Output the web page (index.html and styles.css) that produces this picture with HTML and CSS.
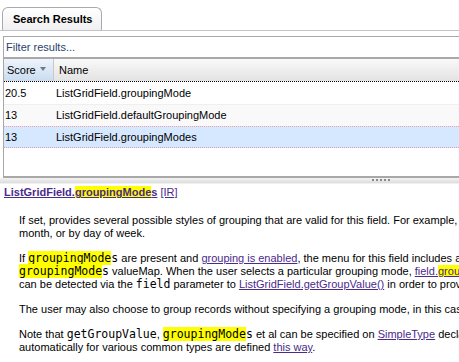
FILE: index.html
```html
<!DOCTYPE html>
<html>
<head>
<meta charset="utf-8">
<link rel="stylesheet" href="styles.css">
</head>
<body>
<div class="tabbar">
  <div class="tab">Search Results</div>
</div>
<div class="grid">
  <div class="filter">Filter results...</div>
  <div class="header">
    <div class="hcell score">Score<span class="sort"></span></div>
    <div class="hcell name">Name</div>
  </div>
  <div class="rows">
    <div class="row"><div class="c1">20.5</div><div class="c2">ListGridField.groupingMode</div></div>
    <div class="row alt"><div class="c1">13</div><div class="c2">ListGridField.defaultGroupingMode</div></div>
    <div class="row sel"><div class="c1">13</div><div class="c2">ListGridField.groupingModes</div></div>
  </div>
</div>
<div class="splitter"><span class="grip"></span></div>
<div class="detail">
  <div class="title"><a class="tlink">ListGridField.<span class="hl">groupingMode</span>s</a> <a class="ir">[IR]</a></div>
  <div class="body">
    <p>If set, provides several possible styles of grouping that are valid for this field. For example, a date field might be grouped by week, by<br>month, or by day of week.</p>
    <p>If <code><span class="hl">groupingMode</span>s</code> are present and <a>grouping is enabled</a>, the menu for this field includes a submenu of grouping modes generated from the<br><code><span class="hl">groupingMode</span>s</code> valueMap. When the user selects a particular grouping mode, <a>field.<span class="hl">groupingMode</span></a> is set to the user's chosen mode. This choice<br>can be detected via the <code>field</code> parameter to <a>ListGridField.getGroupValue()</a> in order to provide different modes of grouping.</p>
    <p>The user may also choose to group records without specifying a grouping mode, in this case, the default grouping mode is used.</p>
    <p>Note that <code>getGroupValue</code>, <code><span class="hl">groupingMode</span>s</code> et al can be specified on <a>SimpleType</a> declarations, and the grouping modes for dates are built in<br>automatically for various common types are defined <a>this way</a>.</p>
  </div>
</div>
</body>
</html>
```
FILE: styles.css
```css
html, body {
  margin: 0;
  padding: 0;
  background: #fff;
}
body {
  width: 459px;
  height: 362px;
  overflow: hidden;
  font-family: Arial, "Liberation Sans", sans-serif;
  color: #000;
}
.tabbar {
  height: 30px;
  border-bottom: 1px solid #c4c4cc;
  display: flex;
  align-items: flex-end;
  padding-left: 2px;
}
.tab {
  height: 22px;
  width: 88px;
  padding-left: 10px;
  border: 1px solid #a9a9b0;
  border-bottom: none;
  border-radius: 6px 6px 0 0;
  background: linear-gradient(#ffffff, #f0f0f0);
  font-weight: bold;
  font-size: 11px;
  line-height: 22px;
}
.grid {
  margin-top: 5px;
  margin-left: 3px;
  border-left: 1px solid #a8a8a8;
  border-top: 1px solid #a8a8a8;
  border-bottom: 2px solid #a8a8a8;
  height: 139px;
}
.filter {
  height: 20px;
  line-height: 20px;
  font-size: 11px;
  color: #27426b;
  padding-left: 2px;
  border-bottom: 2px solid #a8a8a8;
}
.header {
  display: flex;
  height: 22px;
  border-bottom: 1px dotted #000;
  background: linear-gradient(#f9f9f9, #e3e3e3);
  font-size: 11px;
}
.hcell {
  line-height: 22px;
  padding-left: 3px;
  box-sizing: border-box;
}
.score {
  width: 50px;
  background: linear-gradient(#eef4fb, #c9dcf0);
  border-right: 1px solid #c8c8c8;
  position: relative;
}
.sort {
  position: absolute;
  left: 36px;
  top: 8px;
  width: 0;
  height: 0;
  border-left: 3px solid transparent;
  border-right: 3px solid transparent;
  border-top: 4px solid #6b7a90;
}
.name {
  padding-left: 5px;
}
.rows {
  font-size: 11px;
}
.row {
  display: flex;
  height: 22px;
  line-height: 22px;
  box-sizing: border-box;
}
.row.alt {
  background: #f9f9f9;
  border-top: 1px solid #efefef;
  line-height: 21px;
}
.row.sel {
  background: #d6e8ff;
  border-top: 1px dotted #f0a0a0;
  border-bottom: 1px dotted #d0a0c0;
  line-height: 20px;
}
.c1 {
  width: 51px;
  padding-left: 1px;
}
.c2 {
  flex: 1;
}
.splitter {
  height: 5px;
  background: linear-gradient(#f4f4f4, #dcdcdc);
  border-bottom: 1px solid #f0f0f0;
  position: relative;
}
.grip {
  position: absolute;
  left: 372px;
  top: 1px;
  width: 19px;
  height: 2px;
  background: repeating-linear-gradient(90deg, #8a8a8a 0 2px, transparent 2px 4px);
}
.detail {
  padding-left: 4px;
  white-space: nowrap;
  overflow: hidden;
}
.title {
  font-size: 11px;
  line-height: 14px;
  margin-top: 1px;
}
.title a {
  color: #4a2a8c;
  text-decoration: underline;
}
.tlink {
  font-weight: bold;
}
.hl {
  background: #ffff00;
}
.body {
  padding-left: 15px;
  font-size: 11px;
  line-height: 13px;
}
.body p {
  margin: 15px 0 0 0;
}
.body p + p {
  margin-top: 12px;
}
.body a {
  color: #4a2a8c;
  text-decoration: underline;
}
code {
  font-family: "DejaVu Sans Mono", monospace;
  font-size: 11.5px;
}
```
